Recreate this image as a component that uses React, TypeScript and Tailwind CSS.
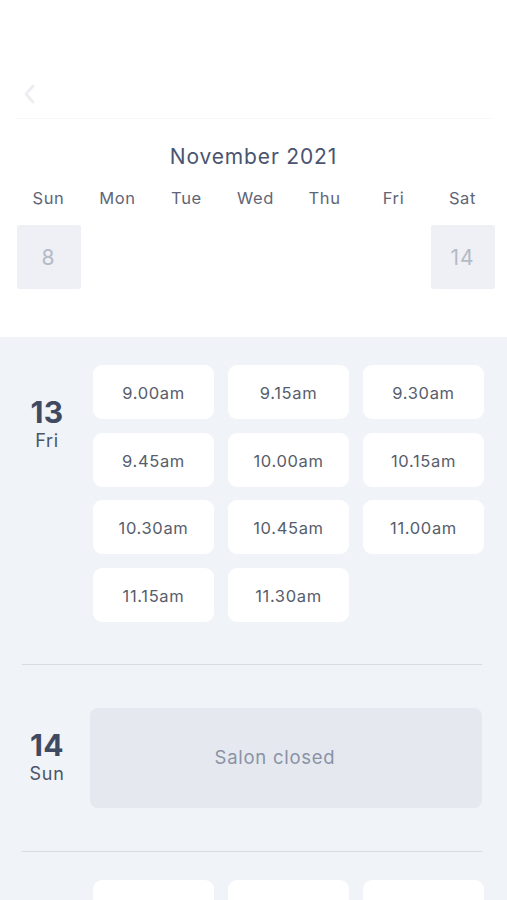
import * as React from "react";

const WEEKDAYS = ["Sun", "Mon", "Tue", "Wed", "Thu", "Fri", "Sat"];

// only the visible part of the week strip: Sunday 8 and Saturday 14
const WEEK: (number | null)[] = [8, null, null, null, null, null, 14];

const FRI_SLOTS = [
  "9.00am",
  "9.15am",
  "9.30am",
  "9.45am",
  "10.00am",
  "10.15am",
  "10.30am",
  "10.45am",
  "11.00am",
  "11.15am",
  "11.30am",
];

const NEXT_SLOTS = ["", "", ""];

function DayLabel({ day, name }: { day: number; name: string }) {
  return (
    <div className="flex w-[50px] shrink-0 flex-col items-center">
      <span className="text-[30px] font-bold leading-[32px] tracking-[0.01em] text-[#3f4a62]">
        {day}
      </span>
      <span className="text-[18px] leading-[26px] tracking-[0.04em] text-[#4b5468]">
        {name}
      </span>
    </div>
  );
}

function SlotGrid({ slots }: { slots: string[] }) {
  return (
    <div className="ml-[21px] grid w-[391px] shrink-0 grid-cols-3 gap-x-[14px] gap-y-[13.5px]">
      {slots.map((s, i) => (
        <button
          key={i}
          type="button"
          className="flex h-[54px] items-center justify-center rounded-[9px] bg-white pt-[3px] text-[16.5px] tracking-[0.04em] text-[#575d6c]"
        >
          {s}
        </button>
      ))}
    </div>
  );
}

export default function App() {
  return (
    <div
      className="flex h-[900px] w-full flex-col overflow-hidden bg-[#f0f3f7]"
      style={{ fontFamily: "Inter, 'Noto Sans', sans-serif" }}
    >
      <div className="bg-white">
        <div className="h-[70px]" />
        <div className="flex h-[48px] items-center px-[23px]">
          <svg width="14" height="22" viewBox="0 0 14 22" fill="none" aria-hidden>
            <path
              d="M10 3L3 11l7 8"
              stroke="#eceef2"
              strokeWidth="3"
              strokeLinecap="round"
              strokeLinejoin="round"
            />
          </svg>
        </div>
        <div className="mx-[15px] h-px bg-[#f6f7f9]" />

        <div className="pt-[25px] text-center text-[21px] leading-[26px] tracking-[0.04em] text-[#4a5470]">
          November 2021
        </div>

        <div className="mt-[17px] grid grid-cols-7 pl-[14px] pr-[10px]">
          {WEEKDAYS.map((d) => (
            <div
              key={d}
              className="text-center text-[16.5px] leading-[22px] tracking-[0.04em] text-[#5f6677]"
            >
              {d}
            </div>
          ))}
        </div>

        <div className="mt-[16px] grid grid-cols-7 pl-[14px] pr-[10px] pb-[48px]">
          {WEEK.map((n, i) => (
            <div key={i} className="flex justify-center">
              {n !== null ? (
                <div className="flex h-[64px] w-[64px] items-center justify-center rounded-[2px] bg-[#eef0f5] pt-[2px] text-[21px] tracking-[0.04em] text-[#b4bac6]">
                  {n}
                </div>
              ) : (
                <div className="h-[64px] w-[64px]" />
              )}
            </div>
          ))}
        </div>
      </div>

      <div className="pl-[22px] pr-[25px]">
        <div className="flex items-start pt-[28px] pb-[42px]">
          <div className="pt-[31px]">
            <DayLabel day={13} name="Fri" />
          </div>
          <SlotGrid slots={FRI_SLOTS} />
        </div>

        <div className="h-px bg-[#d7dce4]" />

        <div className="flex items-center py-[43px]">
          <DayLabel day={14} name="Sun" />
          <div className="ml-[18px] flex h-[100px] flex-1 items-center justify-center rounded-[8px] bg-[#e5e9ef] pr-[22px] text-[18.5px] tracking-[0.04em] text-[#8a92a5]">
            Salon closed
          </div>
        </div>

        <div className="h-px bg-[#d7dce4]" />

        <div className="flex items-start pt-[28px]">
          <div className="w-[50px] shrink-0" />
          <SlotGrid slots={NEXT_SLOTS} />
        </div>
      </div>
    </div>
  );
}
